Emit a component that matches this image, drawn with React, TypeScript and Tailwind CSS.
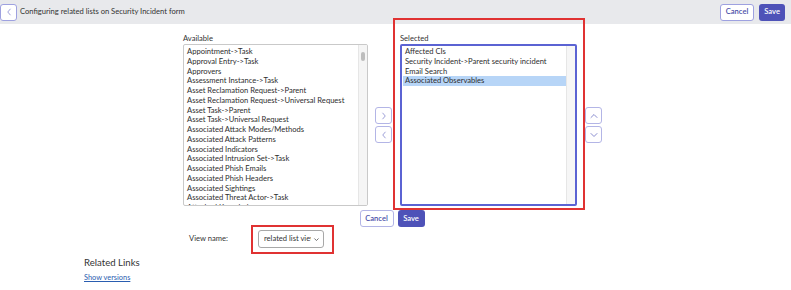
import React from "react";

const available = [
  "Appointment->Task",
  "Approval Entry->Task",
  "Approvers",
  "Assessment Instance->Task",
  "Asset Reclamation Request->Parent",
  "Asset Reclamation Request->Universal Request",
  "Asset Task->Parent",
  "Asset Task->Universal Request",
  "Associated Attack Modes/Methods",
  "Associated Attack Patterns",
  "Associated Indicators",
  "Associated Intrusion Set->Task",
  "Associated Phish Emails",
  "Associated Phish Headers",
  "Associated Sightings",
  "Associated Threat Actor->Task",
  "Attached Knowledge",
];

const selected = [
  "Affected CIs",
  "Security Incident->Parent security incident",
  "Email Search",
  "Associated Observables",
];

const Chevron = ({ dir }: { dir: "left" | "right" | "up" | "down" }) => {
  const d = {
    left: "M6.5 2.5 L3.5 6 L6.5 9.5",
    right: "M3.5 2.5 L6.5 6 L3.5 9.5",
    up: "M2 6.5 L5 3.5 L8 6.5",
    down: "M2 3.5 L5 6.5 L8 3.5",
  }[dir];
  const vb = dir === "left" || dir === "right" ? "0 0 10 12" : "0 0 10 10";
  return (
    <svg width="10" height="10" viewBox={vb} fill="none">
      <path d={d} stroke="#8a8dd0" strokeWidth="1" strokeLinecap="round" strokeLinejoin="round" />
    </svg>
  );
};

const IconBtn = ({ dir }: { dir: "left" | "right" | "up" | "down" }) => (
  <div className="w-[17px] h-[17px] border border-[#b3b5e6] rounded-[3px] bg-white flex items-center justify-center">
    <Chevron dir={dir} />
  </div>
);

export default function App() {
  return (
    <div
      className="relative w-[791px] h-[290px] bg-white overflow-hidden text-[#2b2b2b]"
      style={{ fontFamily: "Lato, 'Liberation Sans', sans-serif" }}
    >
      {/* Header */}
      <div className="h-[24px] bg-[#e8e9ec] flex items-center justify-between pr-[6px]">
        <div className="flex items-center">
          <div className="w-[17px] h-[17px] bg-white border border-[#9ea1e0] rounded-[3px] flex items-center justify-center">
            <Chevron dir="left" />
          </div>
          <span className="ml-[3px] text-[7.6px] text-[#333]">Configuring related lists on Security Incident form</span>
        </div>
        <div className="flex items-center gap-[5px]">
          <button className="h-[17px] px-[5px] bg-white border border-[#9ea1e0] rounded-[3px] text-[7.6px] text-[#4a4ea8] font-semibold">
            Cancel
          </button>
          <button className="h-[17px] px-[5px] bg-[#4e52b8] rounded-[3px] text-[7.6px] text-white font-semibold">
            Save
          </button>
        </div>
      </div>

      {/* Main lists */}
      <div className="pl-[183px] pt-[8px]">
        <div className="flex items-center w-[418px]">
          <div className="w-[185px] shrink-0">
            <div className="h-[12px] text-[7.6px] leading-[12px] text-[#333]">Available</div>
            <div className="h-[162px] border border-[#c9c9c9] rounded-[2px] flex overflow-hidden">
              <div className="flex-1 pl-[3px] pt-[2px] overflow-hidden">
                {available.map((a) => (
                  <div key={a} className="h-[9.75px] leading-[9.75px] text-[7.6px] whitespace-nowrap text-[#2e2e2e]">
                    {a}
                  </div>
                ))}
              </div>
              <div className="w-[9px] bg-[#f5f5f5] border-l border-[#e6e6e6] flex justify-center pt-[7px]">
                <div className="w-[4px] h-[9px] rounded-[2px] bg-[#bdbdbd]" />
              </div>
            </div>
          </div>

          <div className="ml-[7px] mt-[12px] flex flex-col gap-[2px]">
            <IconBtn dir="right" />
            <IconBtn dir="left" />
          </div>

          <div className="ml-[8px] w-[177px] shrink-0">
            <div className="h-[12px] text-[7.6px] leading-[12px] text-[#333]">Selected</div>
            <div className="h-[162px] border-2 border-[#5b63d3] rounded-[2px] flex overflow-hidden">
              <div className="flex-1 pl-[1px] pt-[1px] overflow-hidden">
                {selected.map((a, i) => (
                  <div
                    key={a}
                    className={`h-[9.75px] leading-[9.75px] text-[7.6px] whitespace-nowrap pl-[2px] text-[#2e2e2e] ${
                      i === 3 ? "bg-[#b7d5f7]" : ""
                    }`}
                  >
                    {a}
                  </div>
                ))}
              </div>
              <div className="w-[9px] bg-[#f6f6f6] border-l border-[#e6e6e6]" />
            </div>
          </div>

          <div className="ml-[8px] mt-[12px] flex flex-col gap-[2px]">
            <IconBtn dir="up" />
            <IconBtn dir="down" />
          </div>
        </div>

        <div className="w-[418px] flex justify-center gap-[4px] mt-[4px]">
          <button className="h-[17px] w-[34px] bg-white border border-[#b3b5e6] rounded-[3px] text-[7.6px] text-[#4a4ea8] font-semibold">
            Cancel
          </button>
          <button className="h-[17px] w-[27px] bg-[#4e52b8] rounded-[3px] text-[7.6px] text-white font-semibold">
            Save
          </button>
        </div>

        <div className="flex items-center mt-[3px] pl-[6px]">
          <span className="w-[69px] text-[7.6px] text-[#333]">View name:</span>
          <div className="w-[66px] h-[18px] border border-[#a8a8a8] rounded-[3px] flex items-center pl-[5px] pr-[3px] overflow-hidden">
            <span className="text-[7.6px] whitespace-nowrap overflow-hidden w-[48px] text-[#333]">related list view</span>
            <svg width="7" height="7" viewBox="0 0 10 10" className="ml-[2px]">
              <path d="M2 3.5 L5 6.5 L8 3.5" stroke="#555" strokeWidth="1.2" fill="none" />
            </svg>
          </div>
        </div>
      </div>

      <div className="pl-[84px] mt-[9px]">
        <div className="text-[9.6px] text-[#333] leading-[12px]">Related Links</div>
        <a className="block mt-[3px] text-[7.4px] text-[#2a5db0] underline">Show versions</a>
      </div>

      {/* Annotation boxes */}
      <div className="absolute left-[393px] top-[18px] w-[192px] h-[192px] border-2 border-[#e03232]" />
      <div className="absolute left-[251px] top-[225px] w-[83px] h-[29px] border-2 border-[#e03232]" />
    </div>
  );
}
